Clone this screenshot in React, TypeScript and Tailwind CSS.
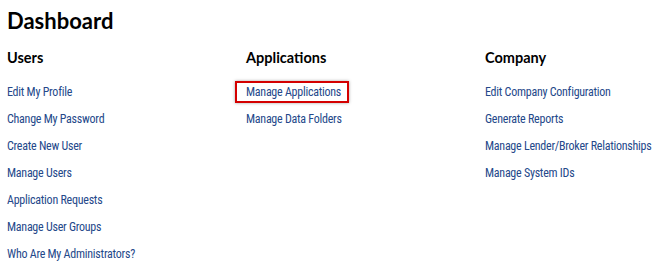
const sections: { title: string; links: string[] }[] = [
    {
        title: "Users",
        links: [
            "Edit My Profile",
            "Change My Password",
            "Create New User",
            "Manage Users",
            "Application Requests",
            "Manage User Groups",
            "Who Are My Administrators?",
        ],
    },
    {
        title: "Applications",
        links: ["Manage Applications", "Manage Data Folders"],
    },
    {
        title: "Company",
        links: [
            "Edit Company Configuration",
            "Generate Reports",
            "Manage Lender/Broker Relationships",
            "Manage System IDs",
        ],
    },
];

const highlighted = "Manage Applications";

const App = () => {
    return (
        <div className="w-[658px] h-[269px] bg-white pl-[7px] pt-[7px] font-['Lato',sans-serif] overflow-hidden">
            <h1 className="text-[22px] leading-[28px] font-bold text-black">
                Dashboard
            </h1>
            <div className="grid grid-cols-[239px_239px_1fr] mt-[13px]">
                {sections.map((section) => (
                    <div key={section.title} className="whitespace-nowrap">
                        <h2 className="text-[14.5px] leading-[20px] font-bold text-black">
                            {section.title}
                        </h2>
                        <ul className="mt-[9px]">
                            {section.links.map((link) => (
                                <li key={link} className="h-[27px] leading-[26px]">
                                    <a
                                        href="#"
                                        className="relative font-['Roboto_Condensed',sans-serif] text-[12px] tracking-[-0.25px] text-[#24488a]"
                                    >
                                        {link}
                                        {link == highlighted && (
                                            <span className="absolute -left-[11px] -right-[8px] top-[-4px] h-[22px] border-2 border-[#d40000] shadow-[0_0_3px_rgba(0,0,0,0.35)]" />
                                        )}
                                    </a>
                                </li>
                            ))}
                        </ul>
                    </div>
                ))}
            </div>
        </div>
    );
};

export default App;
